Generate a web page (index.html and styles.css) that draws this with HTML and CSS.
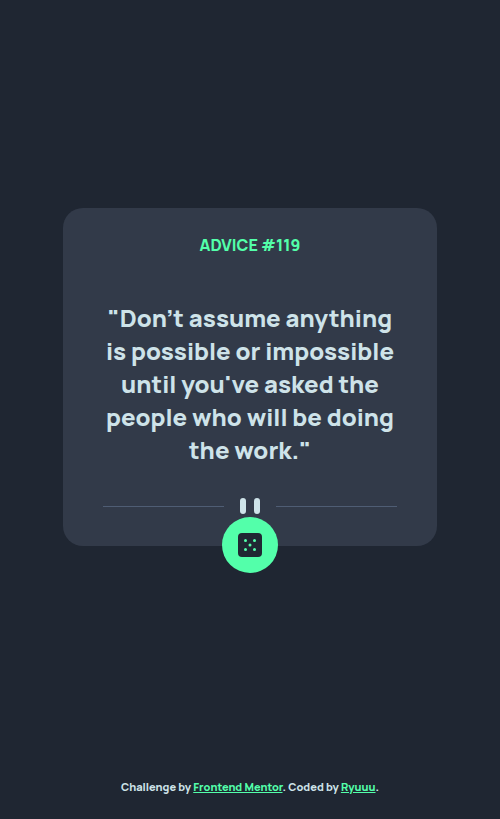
FILE: index.html
```html
<!DOCTYPE html>
<html lang="en">
<head>
<meta charset="utf-8">
<meta name="viewport" content="width=device-width, initial-scale=1">
<title>Advice generator</title>
<link rel="stylesheet" href="styles.css">
</head>
<body>
<main class="page">
  <section class="card">
    <h1 class="card-title">ADVICE #119</h1>
    <p class="quote">"Don’t assume anything is possible or impossible until you've asked the people who will be doing the work."</p>
    <div class="divider">
      <svg width="20" height="16" viewBox="0 0 20 16" aria-hidden="true"><g fill="#CEE3E9"><rect width="6" height="16" rx="3"/><rect x="14" width="6" height="16" rx="3"/></g></svg>
    </div>
    <button class="dice" type="button" aria-label="New advice">
      <svg width="24" height="24" viewBox="0 0 24 24" aria-hidden="true"><rect width="24" height="24" rx="4" fill="#202733"/><g fill="#53FFAA"><circle cx="7.500" cy="7.500" r="1.500"/><circle cx="16.500" cy="7.500" r="1.500"/><circle cx="12" cy="12" r="1.500"/><circle cx="7.500" cy="16.500" r="1.500"/><circle cx="16.500" cy="16.500" r="1.500"/></g></svg>
    </button>
  </section>
</main>
<footer class="footer">Challenge by <a href="#">Frontend Mentor</a>. Coded by <a href="#">Ryuuu</a>.</footer>
</body>
</html>
```
FILE: styles.css
```css
* {
  box-sizing: border-box;
}

body {
  display: flex;
  flex-direction: column;
  margin: 0;
  min-height: 100vh;
  background: #1f2632;
  color: #cee3e9;
  font-family: Manrope, Inter, sans-serif;
  font-weight: 800;
}

.page {
  flex: 1;
  display: flex;
  align-items: center;
  justify-content: center;
  padding: 40px 24px;
}

.card {
  position: relative;
  width: 100%;
  max-width: 374px;
  padding: 26px 40px 32px;
  border-radius: 20px;
  background: #323a49;
  text-align: center;
}

.card-title {
  margin: 0 0 45px;
  color: #53ffaa;
  font-size: 16px;
  line-height: 22px;
  font-weight: 800;
}

.quote {
  margin: 0 0 32px;
  font-size: 24px;
  line-height: 33px;
}

.divider {
  display: flex;
  align-items: center;
  gap: 16px;
}

.divider::before,
.divider::after {
  content: "";
  flex: 1;
  height: 1px;
  background: #4f5d74;
}

.dice {
  position: absolute;
  bottom: -27px;
  left: 50%;
  display: grid;
  place-items: center;
  width: 56px;
  height: 56px;
  margin-left: -28px;
  padding: 0;
  border: 0;
  border-radius: 50%;
  background: #53ffaa;
  cursor: pointer;
}

.footer {
  padding: 25px 16px;
  font-size: 11px;
  line-height: 15px;
  text-align: center;
}

.footer a {
  color: #53ffaa;
}
```
